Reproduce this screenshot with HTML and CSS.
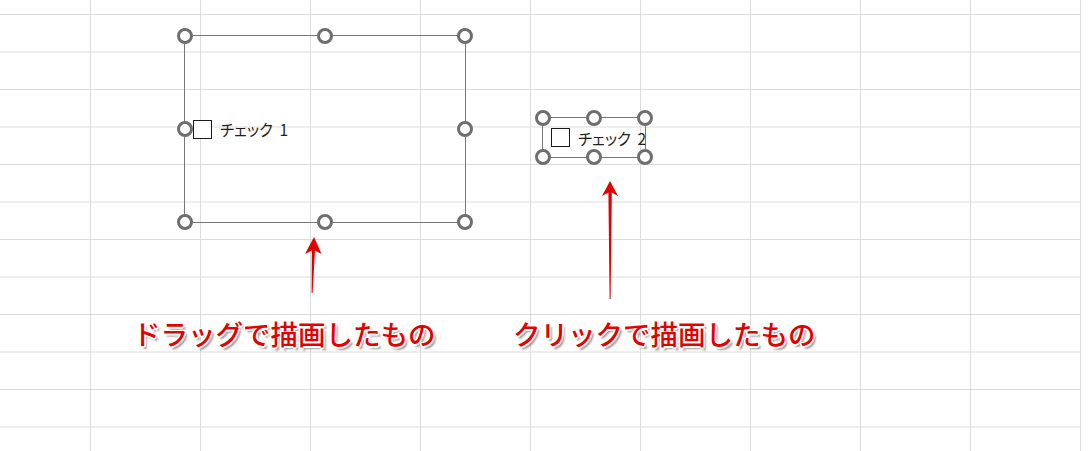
FILE: index.html
```html
<!DOCTYPE html>
<html lang="ja">
<head>
<meta charset="utf-8">
<title>チェックボックス</title>
<link rel="stylesheet" href="styles.css">
</head>
<body>
<div class="sheet">
  <div class="shape shape-drag">
    <label class="check"><span class="box"></span><span class="cap">チェック 1</span></label>
    <span class="h tl"></span><span class="h tc"></span><span class="h tr"></span>
    <span class="h ml"></span><span class="h mr"></span>
    <span class="h bl"></span><span class="h bc"></span><span class="h br"></span>
  </div>
  <div class="shape shape-click">
    <label class="check"><span class="box"></span><span class="cap">チェック 2</span></label>
    <span class="h tl"></span><span class="h tc"></span><span class="h tr"></span>
    <span class="h bl"></span><span class="h bc"></span><span class="h br"></span>
  </div>
  <svg class="arrows" width="1090" height="451" viewBox="0 0 1090 451">
    <polygon fill="#e20000" points="314,237 321.5,254 315,250.5 312.6,293 311.6,293 311.8,250.5 305,254"/>
    <polygon fill="#e20000" points="610,181 618,196 611.8,192.5 610.6,299 609.6,299 608.4,192.5 602,196"/>
  </svg>
  <div class="note note-drag">ドラッグで描画したもの</div>
  <div class="note note-click">クリックで描画したもの</div>
</div>
</body>
</html>
```
FILE: styles.css
```css
html, body {
  margin: 0;
  padding: 0;
  background: #ffffff;
}
.sheet {
  position: relative;
  width: 1090px;
  height: 451px;
  overflow: hidden;
  font-family: "Noto Sans CJK JP", "Noto Sans", sans-serif;
  background-color: #ffffff;
  background-image:
    linear-gradient(to right, #dcdcdc 0, #dcdcdc 1px, transparent 1px),
    linear-gradient(to bottom, #dcdcdc 0, #dcdcdc 1px, transparent 1px);
  background-size: 110px 100%, 1080px 37.5px;
  background-position: 90px 0, 0 14px;
  background-repeat: repeat-x, repeat-y;
}
.shape {
  position: absolute;
  box-sizing: border-box;
  border: 1px solid #777777;
  display: flex;
  align-items: center;
  padding-left: 8px;
}
.shape-drag {
  left: 184px;
  top: 35px;
  width: 282px;
  height: 188px;
}
.shape-click {
  left: 542px;
  top: 117px;
  width: 104px;
  height: 41px;
}
.check {
  display: flex;
  align-items: center;
  gap: 8px;
  color: #1e1e1e;
  font-size: 15.5px;
  line-height: 20px;
  font-feature-settings: "palt";
  word-spacing: 3px;
  white-space: nowrap;
}
.box {
  width: 19px;
  height: 19px;
  box-sizing: border-box;
  border: 1px solid #1a1a1a;
  background: #fff;
}
.h {
  position: absolute;
  width: 16px;
  height: 16px;
  box-sizing: border-box;
  border: 3px solid #6e6e6e;
  border-radius: 50%;
  background: #ffffff;
  margin: -8.5px 0 0 -8.5px;
}
.tl { left: 0; top: 0; }
.tc { left: 50%; top: 0; }
.tr { left: 100%; top: 0; }
.ml { left: 0; top: 50%; }
.mr { left: 100%; top: 50%; }
.bl { left: 0; top: 100%; }
.bc { left: 50%; top: 100%; }
.br { left: 100%; top: 100%; }
.arrows {
  position: absolute;
  left: 0;
  top: 0;
}
.note {
  position: absolute;
  top: 319px;
  font-size: 27.5px;
  line-height: 28px;
  font-weight: 500;
  letter-spacing: 0;
  color: #e30000;
  white-space: nowrap;
  text-shadow:
    1.5px 0 0 #fff, -1.5px 0 0 #fff, 0 1.5px 0 #fff, 0 -1.5px 0 #fff,
    1.2px 1.2px 0 #fff, -1.2px 1.2px 0 #fff, 1.2px -1.2px 0 #fff, -1.2px -1.2px 0 #fff,
    2.5px 2.5px 2px rgba(0, 0, 0, 0.4);
}
.note-drag { left: 133px; }
.note-click { left: 513px; }
```
